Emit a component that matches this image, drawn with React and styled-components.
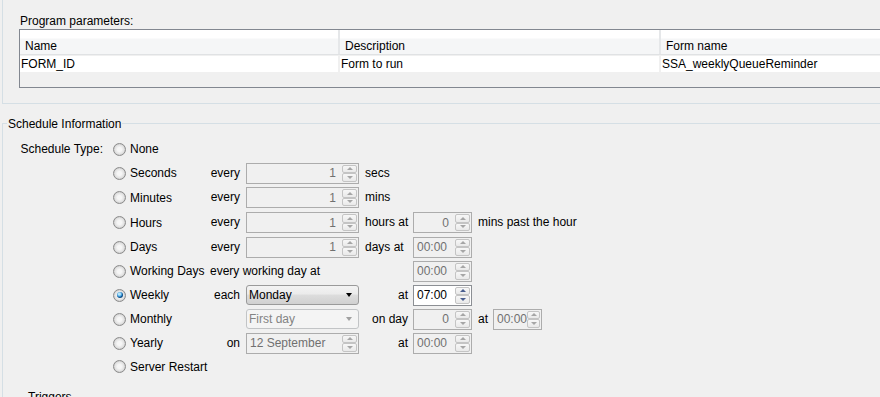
import React from "react";
import styled, { createGlobalStyle, css } from "styled-components";

const GlobalStyle = createGlobalStyle`
  body {
    margin: 0;
    background: #f0f0f0;
    font-family: "Liberation Sans", Arial, sans-serif;
    font-size: 12px;
    color: #000;
    overflow: hidden;
  }
`;

const COLS = "101px 102px 30px 119px 54px 59px 21px 49px 1fr";
const ROW_HEIGHTS = [24, 24, 25, 25, 24, 24, 24, 24, 24, 23];

// Layout
const Page = styled.div`
  padding-left: 2px;
`;

const ParamsPanel = styled.section`
  height: 104px;
  box-sizing: border-box;
  border-left: 1px solid #d5dfe5;
  border-bottom: 1px solid #d5dfe5;
  padding: 15px 0 0 16px;
`;

const PanelTitle = styled.div`
  line-height: 13px;
  padding-left: 1px;
  margin-bottom: 1px;
`;

// Parameter table
const Table = styled.div`
  height: 59px;
  box-sizing: border-box;
  border: 1px solid #828790;
  border-right: none;
  background: #f0f0f0;
`;

const TableRow = styled.div`
  display: grid;
  grid-template-columns: 320px 321px 1fr;
  ${(p) =>
    p.$header
      ? css`
          height: 25px;
          background: linear-gradient(#fff 0 8px, #f5f6f7 9px);
          border-bottom: 1px solid #e0e2e4;
          box-sizing: border-box;
        `
      : css`
          height: 16px;
          margin-top: 1px;
          background: #fff;
        `}
`;

const TableCell = styled.div`
  display: flex;
  align-items: ${(p) => (p.$header ? "flex-end" : "center")};
  padding: ${(p) => (p.$header ? "0 0 0 5px" : "1px 0 0 1px")};
  line-height: 15px;
  border-right: 2px solid ${(p) => (p.$header ? "#e5e7e9" : "#f0f0f0")};
  white-space: nowrap;
  &:last-child {
    border-right: none;
  }
`;

// Schedule group
const Group = styled.fieldset`
  margin: 11px 0 0;
  padding: 0 0 0 4px;
  border: 1px solid #d5dfe5;
  border-right: none;
  border-bottom: none;
  min-width: 0;
`;

const Legend = styled.legend`
  padding: 2px 1px 0;
  line-height: 15px;
`;

const Rows = styled.div`
  margin-top: 5px;
`;

const Row = styled.div`
  display: grid;
  grid-template-columns: ${COLS};
  height: ${(p) => p.$h}px;
  align-items: center;
`;

const Text = styled.span`
  grid-column: ${(p) => p.$col} / span ${(p) => p.$span || 1};
  justify-self: ${(p) => (p.$end ? "end" : "start")};
  padding-left: ${(p) => p.$pl || 0}px;
  padding-right: ${(p) => p.$pr || 0}px;
  white-space: nowrap;
  line-height: 15px;
`;

// Radio
const RadioLabel = styled.label`
  grid-column: 2;
  display: flex;
  align-items: center;
  gap: 4px;
  padding-left: 5px;
  white-space: nowrap;
`;

const RadioCircle = styled.span`
  position: relative;
  width: 13px;
  height: 13px;
  box-sizing: border-box;
  border-radius: 50%;
  border: 1px solid #8b8b8b;
  background: radial-gradient(circle, #f6f6f6 0 2px, #e2e2e2 4.5px, #cfcfcf 5.5px);
  flex-shrink: 0;
  ${(p) =>
    p.$checked &&
    css`
      &::after {
        content: "";
        position: absolute;
        left: 2.5px;
        top: 2.5px;
        width: 6px;
        height: 6px;
        border-radius: 50%;
        background: radial-gradient(circle at 40% 35%, #b4e5fb 0 1px, #2f8fd4 2.5px, #124f85 3.2px);
      }
    `}
`;

const Radio = ({ label, checked }) => (
  <RadioLabel>
    <RadioCircle $checked={checked} />
    {label}
  </RadioLabel>
);

// Spinner
const SpinBox = styled.div`
  grid-column: ${(p) => p.$col};
  margin-left: ${(p) => p.$ml || 0}px;
  width: ${(p) => p.$w}px;
  height: 21px;
  box-sizing: border-box;
  border: 1px solid ${(p) => (p.$disabled ? "#acacac" : "#8c8f94")};
  background: ${(p) => (p.$disabled ? "#f0f0f0" : "#fff")};
  display: flex;
  align-items: stretch;
  padding: 1px;
`;

const SpinValue = styled.span`
  flex: 1;
  display: flex;
  align-items: center;
  justify-content: ${(p) => (p.$right ? "flex-end" : "flex-start")};
  padding: ${(p) => (p.$right ? "0 6px 0 0" : "0 0 0 2px")};
  color: ${(p) => (p.$disabled ? "#707070" : "#000")};
  white-space: nowrap;
`;

const SpinButtons = styled.div`
  width: 15px;
  display: flex;
  flex-direction: column;
`;

const SpinButton = styled.span`
  flex: 1;
  display: flex;
  align-items: center;
  justify-content: center;
  border: 1px solid #c4c4c4;
  border-radius: 2px;
  background: linear-gradient(#f7f7f7, #e9e9e9);
`;

const Arrow = styled.span`
  width: 0;
  height: 0;
  border-left: 3px solid transparent;
  border-right: 3px solid transparent;
  ${(p) =>
    p.$down
      ? css`border-top: 3px solid ${p.$color};`
      : css`border-bottom: 3px solid ${p.$color};`}
`;

const Spinner = ({ col, ml, w, value, right, disabled = true }) => {
  const color = disabled ? "#a6a6a6" : "#4a5f8f";
  return (
    <SpinBox $col={col} $ml={ml} $w={w} $disabled={disabled}>
      <SpinValue $right={right} $disabled={disabled}>
        {value}
      </SpinValue>
      <SpinButtons>
        <SpinButton>
          <Arrow $color={color} />
        </SpinButton>
        <SpinButton>
          <Arrow $down $color={color} />
        </SpinButton>
      </SpinButtons>
    </SpinBox>
  );
};

// Combo
const Combo = styled.div`
  grid-column: 4;
  margin-left: 6px;
  width: 113px;
  height: 20px;
  box-sizing: border-box;
  border: 1px solid ${(p) => (p.$disabled ? "#c2c4c6" : "#9a9a9a")};
  border-radius: 3px;
  display: flex;
  align-items: center;
  justify-content: space-between;
  padding: 0 6px 0 2px;
  color: ${(p) => (p.$disabled ? "#838383" : "#000")};
  background: ${(p) =>
    p.$disabled
      ? "#f4f4f4"
      : "linear-gradient(#f3f3f3 0%, #ebebeb 45%, #dddddd 50%, #d0d0d0 100%)"};
  white-space: nowrap;
`;

const ComboArrow = styled.span`
  width: 0;
  height: 0;
  border-left: 3.5px solid transparent;
  border-right: 3.5px solid transparent;
  border-top: 4px solid ${(p) => (p.$disabled ? "#a0a0a0" : "#000")};
`;

const Triggers = styled.div`
  margin-top: 12px;
  padding-left: 21px;
  line-height: 15px;
`;

const rows = [
  (
    <>
      <Text $col={1} $end $pr={5}>Schedule Type:</Text>
      <Radio label="None" />
    </>
  ),
  (
    <>
      <Radio label="Seconds" />
      <Text $col={3} $end>every</Text>
      <Spinner col={4} ml={6} w={113} value="1" right />
      <Text $col={5} $pl={6}>secs</Text>
    </>
  ),
  (
    <>
      <Radio label="Minutes" />
      <Text $col={3} $end>every</Text>
      <Spinner col={4} ml={6} w={113} value="1" right />
      <Text $col={5} $pl={6}>mins</Text>
    </>
  ),
  (
    <>
      <Radio label="Hours" />
      <Text $col={3} $end>every</Text>
      <Spinner col={4} ml={6} w={113} value="1" right />
      <Text $col={5} $pl={6}>hours at</Text>
      <Spinner col={6} w={59} value="0" right />
      <Text $col={7} $span={3} $pl={6}>mins past the hour</Text>
    </>
  ),
  (
    <>
      <Radio label="Days" />
      <Text $col={3} $end>every</Text>
      <Spinner col={4} ml={6} w={113} value="1" right />
      <Text $col={5} $pl={6}>days at</Text>
      <Spinner col={6} w={59} value="00:00" />
    </>
  ),
  (
    <>
      <Radio label="Working Days" />
      <Text $col={3} $span={3}>every working day at</Text>
      <Spinner col={6} w={59} value="00:00" />
    </>
  ),
  (
    <>
      <Radio label="Weekly" checked />
      <Text $col={3} $end>each</Text>
      <Combo>
        Monday
        <ComboArrow />
      </Combo>
      <Text $col={5} $end $pr={5}>at</Text>
      <Spinner col={6} w={59} value="07:00" disabled={false} />
    </>
  ),
  (
    <>
      <Radio label="Monthly" />
      <Combo $disabled>
        First day
        <ComboArrow $disabled />
      </Combo>
      <Text $col={5} $end $pr={5}>on day</Text>
      <Spinner col={6} w={59} value="0" right />
      <Text $col={7} $pl={6}>at</Text>
      <Spinner col={8} w={49} value="00:00" />
    </>
  ),
  (
    <>
      <Radio label="Yearly" />
      <Text $col={3} $end>on</Text>
      <Spinner col={4} ml={6} w={113} value="12 September" />
      <Text $col={5} $end $pr={5}>at</Text>
      <Spinner col={6} w={59} value="00:00" />
    </>
  ),
  (
    <>
      <Radio label="Server Restart" />
    </>
  ),
];

export default function App() {
  return (
    <Page>
      <GlobalStyle />
      <ParamsPanel>
        <PanelTitle>Program parameters:</PanelTitle>
        <Table>
          <TableRow $header>
            <TableCell $header>Name</TableCell>
            <TableCell $header>Description</TableCell>
            <TableCell $header>Form name</TableCell>
          </TableRow>
          <TableRow>
            <TableCell>FORM_ID</TableCell>
            <TableCell>Form to run</TableCell>
            <TableCell>SSA_weeklyQueueReminder</TableCell>
          </TableRow>
        </Table>
      </ParamsPanel>

      <Group>
        <Legend>Schedule Information</Legend>
        <Rows>
          {rows.map((content, i) => (
            <Row key={i} $h={ROW_HEIGHTS[i]}>
              {content}
            </Row>
          ))}
        </Rows>
        <Triggers>Triggers</Triggers>
      </Group>
    </Page>
  );
}
